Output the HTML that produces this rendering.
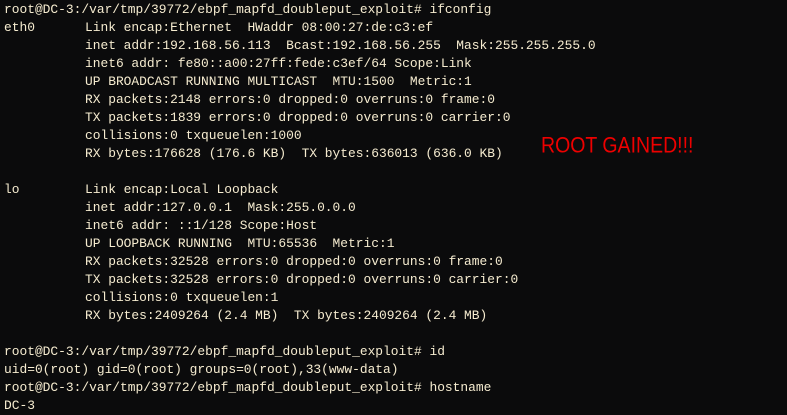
<!DOCTYPE html>
<html><head><style>
html,body{margin:0;padding:0;width:787px;height:414px;background:#0b0b0c;overflow:hidden}
.t{position:absolute;left:4px;top:1px;font-family:"Liberation Mono",monospace;font-size:12.9px;line-height:18px;color:#f6ecd0;white-space:pre}
.l{display:block;height:18px;position:relative}
.i{position:absolute;left:81px}
.r{position:absolute;left:541px;top:134px;font-family:"Liberation Sans",sans-serif;font-size:19.5px;line-height:20px;color:#ee0000;transform:scaleY(1.15);transform-origin:0 0}
</style></head><body>
<div class="t"><span class="l">root@DC-3:/var/tmp/39772/ebpf_mapfd_doubleput_exploit# ifconfig</span><span class="l">eth0<span class="i">Link encap:Ethernet  HWaddr 08:00:27:de:c3:ef</span></span><span class="l"><span class="i">inet addr:192.168.56.113  Bcast:192.168.56.255  Mask:255.255.255.0</span></span><span class="l"><span class="i">inet6 addr: fe80::a00:27ff:fede:c3ef/64 Scope:Link</span></span><span class="l"><span class="i">UP BROADCAST RUNNING MULTICAST  MTU:1500  Metric:1</span></span><span class="l"><span class="i">RX packets:2148 errors:0 dropped:0 overruns:0 frame:0</span></span><span class="l"><span class="i">TX packets:1839 errors:0 dropped:0 overruns:0 carrier:0</span></span><span class="l"><span class="i">collisions:0 txqueuelen:1000</span></span><span class="l"><span class="i">RX bytes:176628 (176.6 KB)  TX bytes:636013 (636.0 KB)</span></span><span class="l"> </span><span class="l">lo<span class="i">Link encap:Local Loopback</span></span><span class="l"><span class="i">inet addr:127.0.0.1  Mask:255.0.0.0</span></span><span class="l"><span class="i">inet6 addr: ::1/128 Scope:Host</span></span><span class="l"><span class="i">UP LOOPBACK RUNNING  MTU:65536  Metric:1</span></span><span class="l"><span class="i">RX packets:32528 errors:0 dropped:0 overruns:0 frame:0</span></span><span class="l"><span class="i">TX packets:32528 errors:0 dropped:0 overruns:0 carrier:0</span></span><span class="l"><span class="i">collisions:0 txqueuelen:1</span></span><span class="l"><span class="i">RX bytes:2409264 (2.4 MB)  TX bytes:2409264 (2.4 MB)</span></span><span class="l"> </span><span class="l">root@DC-3:/var/tmp/39772/ebpf_mapfd_doubleput_exploit# id</span><span class="l">uid=0(root) gid=0(root) groups=0(root),33(www-data)</span><span class="l">root@DC-3:/var/tmp/39772/ebpf_mapfd_doubleput_exploit# hostname</span><span class="l">DC-3</span></div>
<div class="r">ROOT GAINED!!!</div>
</body></html>
